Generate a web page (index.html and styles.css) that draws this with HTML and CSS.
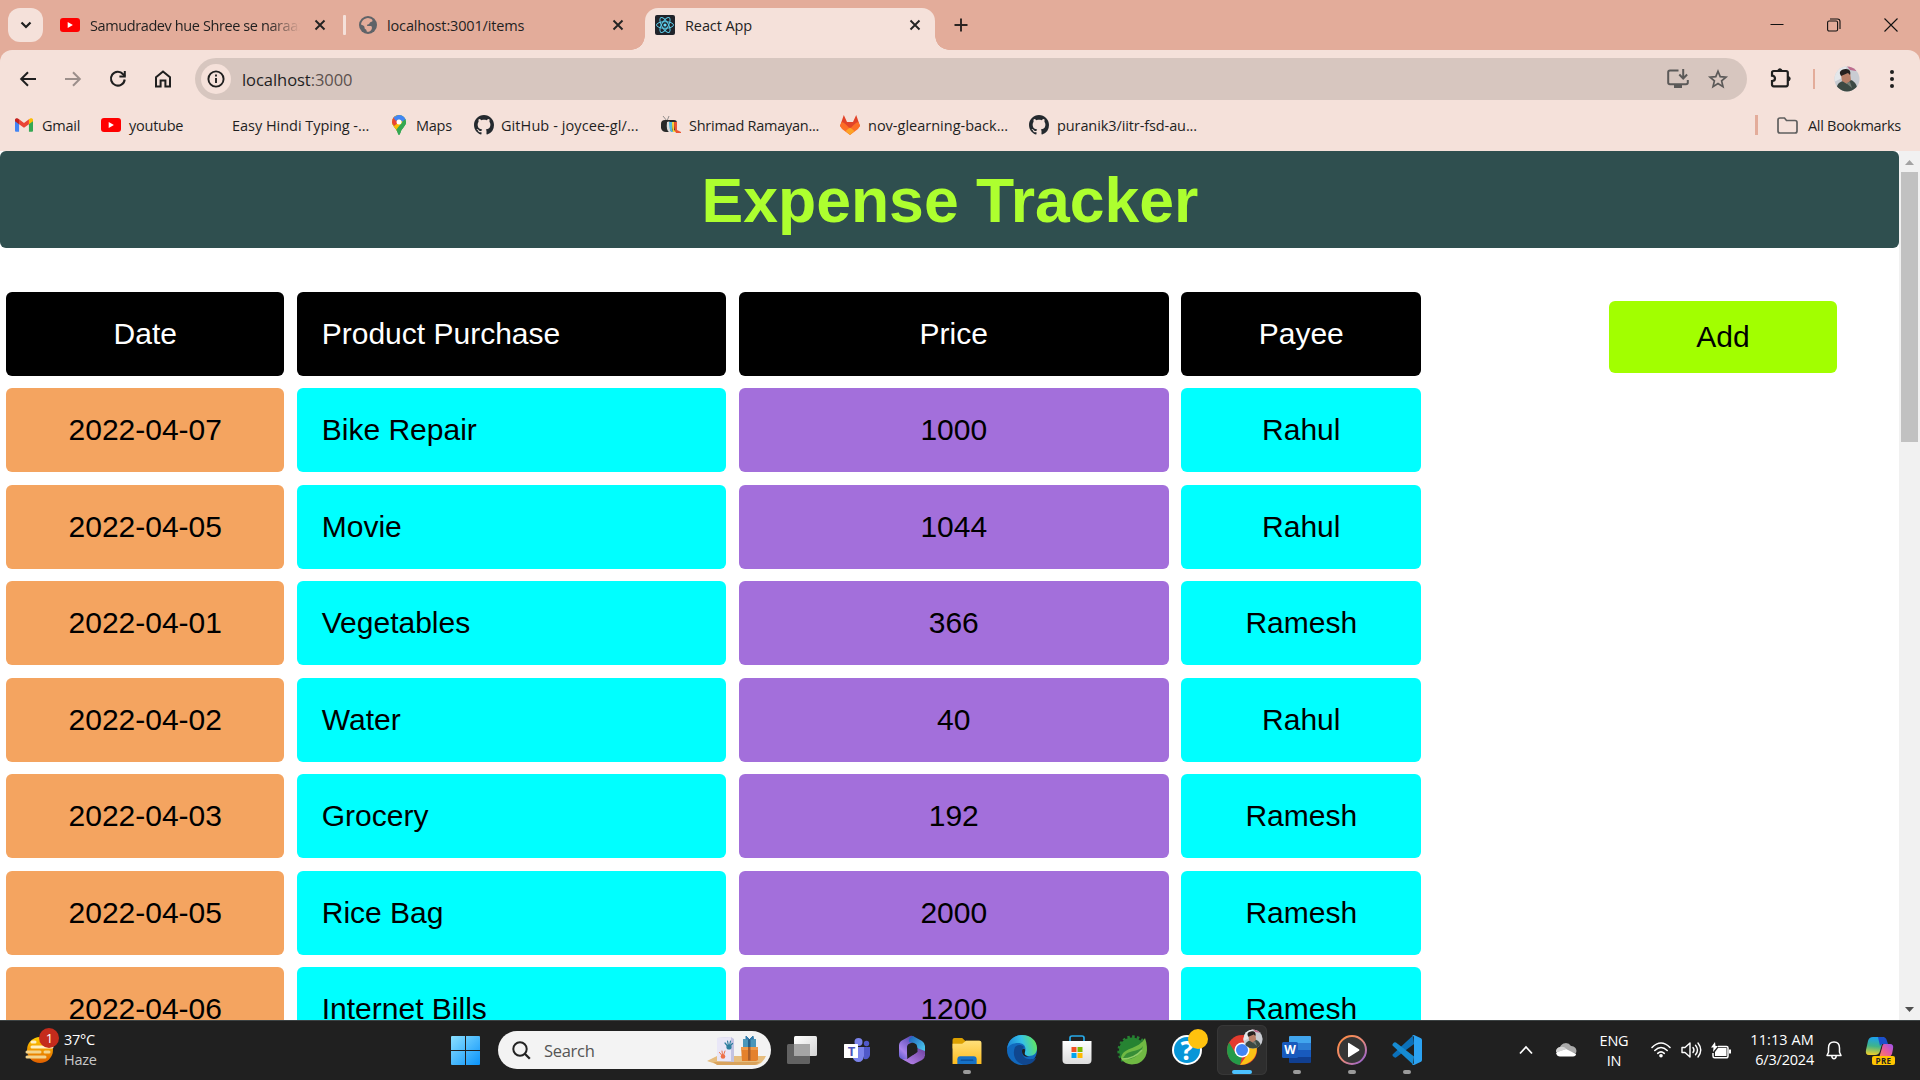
FILE: index.html
```html
<!DOCTYPE html>
<html lang="en">
<head>
<meta charset="utf-8">
<title>Expense Tracker</title>
<link rel="stylesheet" href="styles.css">
</head>
<body>
<svg class="defs" width="0" height="0">
  <defs>
    <linearGradient id="win" x1="0" y1="0" x2="1" y2="1"><stop offset="0" stop-color="#8be0ff"/><stop offset="1" stop-color="#0a93fa"/></linearGradient>
    <linearGradient id="sun" x1="0" y1="0" x2="0" y2="1"><stop offset="0" stop-color="#ffcf00"/><stop offset="1" stop-color="#e05f00"/></linearGradient>
    <linearGradient id="folder" x1="0" y1="0" x2="0" y2="1"><stop offset="0" stop-color="#ffe07a"/><stop offset="1" stop-color="#fdbc20"/></linearGradient>
    <linearGradient id="edge" x1="0" y1="0.4" x2="1" y2="0.2"><stop offset="0" stop-color="#1a84d8"/><stop offset="0.5" stop-color="#35c1e8"/><stop offset="1" stop-color="#66eb4f"/></linearGradient>
    <linearGradient id="store" x1="0" y1="0" x2="0" y2="1"><stop offset="0" stop-color="#fff"/><stop offset="1" stop-color="#dcdcdc"/></linearGradient>
    <linearGradient id="ring" x1="0" y1="0" x2="1" y2="1"><stop offset="0" stop-color="#ff8a3c"/><stop offset="0.5" stop-color="#e98a78"/><stop offset="1" stop-color="#8a5de0"/></linearGradient>
    <linearGradient id="hexA" x1="0" y1="1" x2="0.6" y2="0"><stop offset="0" stop-color="#4a4fc4"/><stop offset="0.4" stop-color="#a884ec"/><stop offset="1" stop-color="#5a4bb4"/></linearGradient>
    <linearGradient id="hexB" x1="0" y1="0" x2="1" y2="1"><stop offset="0" stop-color="#1b5cb8"/><stop offset="1" stop-color="#55ddf8"/></linearGradient>
    <linearGradient id="hexC" x1="0" y1="1" x2="1" y2="0"><stop offset="0" stop-color="#c08cf5"/><stop offset="1" stop-color="#6b3f9c"/></linearGradient>
    <linearGradient id="copA" x1="0.4" y1="0" x2="0.3" y2="1"><stop offset="0" stop-color="#1ba0ee"/><stop offset="0.5" stop-color="#3fb489"/><stop offset="1" stop-color="#f2d02a"/></linearGradient>
    <linearGradient id="copB" x1="1" y1="0" x2="0" y2="1"><stop offset="0" stop-color="#9a52f0"/><stop offset="0.5" stop-color="#e85b9c"/><stop offset="1" stop-color="#ff8a50"/></linearGradient>
    <linearGradient id="task" x1="0" y1="0" x2="1" y2="1"><stop offset="0" stop-color="#fff"/><stop offset="1" stop-color="#d4d4d4"/></linearGradient>
    <symbol id="youtube" viewBox="0 0 20 14"><rect width="20" height="14" rx="3" fill="#f00"/><path d="M7.7 4v6l5.2-3z" fill="#fff"/></symbol>
    <symbol id="close" viewBox="0 0 12 12"><path d="M1.500 1.500l9 9M10.500 1.500l-9 9" stroke="#232323" stroke-width="1.900"/></symbol>
    <symbol id="github" viewBox="0 0 16 16"><path fill="#24292e" d="M8 0C3.58 0 0 3.58 0 8c0 3.54 2.29 6.53 5.47 7.59.4.07.55-.17.55-.38 0-.19-.01-.82-.01-1.49-2.01.37-2.53-.49-2.69-.94-.09-.23-.48-.94-.82-1.13-.28-.15-.68-.52-.01-.53.63-.01 1.08.58 1.23.82.72 1.21 1.87.87 2.33.66.07-.52.28-.87.51-1.07-1.78-.2-3.64-.89-3.64-3.95 0-.87.31-1.59.82-2.15-.08-.2-.36-1.02.08-2.12 0 0 .67-.21 2.2.82.64-.18 1.32-.27 2-.27s1.36.09 2 .27c1.53-1.04 2.2-.82 2.2-.82.44 1.1.16 1.92.08 2.12.51.56.82 1.27.82 2.15 0 3.07-1.87 3.75-3.65 3.95.29.25.54.73.54 1.48 0 1.07-.01 1.93-.01 2.2 0 .21.15.46.55.38A8.01 8.01 0 0016 8c0-4.42-3.58-8-8-8z"/></symbol>
    <symbol id="avatar" viewBox="0 0 26 26"><clipPath id="face"><circle cx="13" cy="13" r="12.500"/></clipPath><g clip-path="url(#face)"><rect width="26" height="26" fill="#c9ccd2"/><path d="M0 0h13l-5 12-8 4z" fill="#e4e7ea"/><path d="M13 0h11l-2 5-6-1z" fill="#bf6d8e"/><path d="M2 26c0-7 3-10 7-11l8-1c5 2 6 6 7 12z" fill="#3c4943"/><path d="M7 9l9-3 1 8-4 4-5-3z" fill="#b98068"/><path d="M6 8c-1-4 4-5 6-5 4 0 5 3 4 6l-2-2-7 3z" fill="#26211f"/><path d="M12 17l4-1 2 6z" fill="#727d75"/></g></symbol>
  </defs>
</svg>

<header class="tabstrip">
  <div class="tabsearch"><svg width="12" height="12" viewBox="0 0 12 12"><path d="M1.500 3.500L6 8l4.500-4.500" fill="none" stroke="#1f1f1f" stroke-width="2.200"/></svg></div>
  <div class="tab tab-video">
    <svg width="20" height="14"><use href="#youtube"/></svg>
    <span class="tab-title faded">Samudradev hue Shree se naraaz</span>
    <svg class="x" width="12" height="12"><use href="#close"/></svg>
  </div>
  <i class="tab-divider"></i>
  <div class="tab tab-items">
    <svg width="18" height="18" viewBox="0 0 18 18"><circle cx="9" cy="9" r="9" fill="#5f6368"/><path d="M9 2c3 .3 4.800 1.500 4.500 3-.3 1-1.500.8-2.500 1.500-.8.700-.3 1.500-1.500 1.700-1.500.2-2 1-1 1.800H12c1.200.5 1.200 2 .5 3.500-.8 1.500-2.500 2.500-4.300 2.300-.9-.3-.4-1.800-1.200-2.300-1.500-.5-1.500-1.500-1.500-2.500C5 9.500 3.500 9 2 8.500 2.500 5 5 2.300 9 2z" fill="#e3ac9a"/></svg>
    <span class="tab-title">localhost:3001/items</span>
    <svg class="x" width="12" height="12"><use href="#close"/></svg>
  </div>
  <div class="tab tab-active">
    <svg width="20" height="20" viewBox="0 0 20 20"><rect width="20" height="20" rx="2" fill="#20232a"/><g fill="none" stroke="#5ccbe8" stroke-width="1"><ellipse cx="10" cy="10" rx="8.500" ry="3.300"/><ellipse cx="10" cy="10" rx="8.500" ry="3.300" transform="rotate(60 10 10)"/><ellipse cx="10" cy="10" rx="8.500" ry="3.300" transform="rotate(120 10 10)"/></g><circle cx="10" cy="10" r="1.600" fill="#61dafb"/></svg>
    <span class="tab-title">React App</span>
    <svg class="x" width="12" height="12"><use href="#close"/></svg>
  </div>
  <svg class="newtab" width="14" height="14" viewBox="0 0 14 14"><path d="M7 .5v13M.5 7h13" stroke="#2b2422" stroke-width="1.900"/></svg>
  <div class="window-buttons">
    <svg width="14" height="14" viewBox="0 0 14 14"><path d="M.5 6.500h13" stroke="#111" stroke-width="1"/></svg>
    <svg width="14" height="14" viewBox="0 0 14 14"><rect x=".6" y="3" width="10" height="10" rx="1.500" fill="none" stroke="#111" stroke-width="1.100"/><path d="M3 1h7.500Q13 1 13 3.500V11" fill="none" stroke="#111" stroke-width="1.100"/></svg>
    <svg width="14" height="14" viewBox="0 0 14 14"><path d="M.5 .5l13 13M13.500 .5l-13 13" stroke="#111" stroke-width="1.100"/></svg>
  </div>
</header>

<div class="chrome-body">
<nav class="toolbar">
  <div class="nav-icons">
    <svg width="18" height="18" viewBox="0 0 18 18"><path d="M17 9H2.500M9 2.200L2.200 9 9 15.800" fill="none" stroke="#1f1f1f" stroke-width="2"/></svg>
    <svg width="18" height="18" viewBox="0 0 18 18"><path d="M1 9h14.500M9 2.200L15.800 9 9 15.800" fill="none" stroke="#9c8f8b" stroke-width="2"/></svg>
    <svg width="18" height="18" viewBox="0 0 18 18"><path d="M15.700 9.500a6.900 6.900 0 1 1-1.600-5.300L16 6" fill="none" stroke="#1f1f1f" stroke-width="2.100"/><path d="M16.800 1v6.400h-6.400v-2h4.400V1z" fill="#1f1f1f"/></svg>
    <svg width="18" height="18" viewBox="0 0 18 18"><path d="M2 7.300L9 1.500l7 5.800v9.300h-4.600V10.500H6.600v6.100H2z" fill="none" stroke="#1f1f1f" stroke-width="2"/></svg>
  </div>
  <div class="omnibox">
    <span class="site-info"><svg width="18" height="18" viewBox="0 0 18 18"><circle cx="9" cy="9" r="7.600" fill="none" stroke="#1f1f1f" stroke-width="1.900"/><path d="M9 8v5M9 4.600v2" stroke="#1f1f1f" stroke-width="1.900"/></svg></span>
    <span class="url">localhost<span class="port">:3000</span></span>
    <svg class="install" width="22" height="20" viewBox="0 0 22 20"><path d="M11.500 1.500H3Q1.200 1.500 1.200 3.300v10.200q0 1.700 1.800 1.700h16q1.800 0 1.800-1.700V11" fill="none" stroke="#5b5958" stroke-width="2"/><path d="M7 15h8v4H7z" fill="#5b5958"/><path d="M16.200 0v9M12.300 5.500l3.900 4 3.900-4" fill="none" stroke="#5b5958" stroke-width="2"/></svg>
    <svg class="star" width="20" height="20" viewBox="0 0 20 20"><path d="M10 2.200l2.200 5.400 5.800.5-4.400 3.800 1.400 5.700-5-3.100-5 3.100 1.400-5.700L2 8.100l5.800-.5z" fill="none" stroke="#5b5958" stroke-width="1.700"/></svg>
  </div>
  <svg class="puzzle" width="22" height="22" viewBox="0 0 22 22"><path d="M3.700 4h12.400q1.700 0 1.700 1.700v11.900q0 1.700-1.700 1.700H3.700q-1.700 0-1.700-1.700v-3.500c4 0 4-5.500 0-5.500V5.700Q2 4 3.700 4z" fill="none" stroke="#1f1f1f" stroke-width="2.200"/><path d="M7.700 4a2.200 2.200 0 0 1 4.400 0M18 9.500a2.200 2.200 0 0 1 0 4.400" fill="#1f1f1f" stroke="#1f1f1f"/></svg>
  <i class="tool-divider"></i>
  <svg class="profile" width="26" height="26"><use href="#avatar"/></svg>
  <svg class="kebab" width="6" height="18" viewBox="0 0 6 18"><g fill="#1f1f1f"><circle cx="3" cy="2" r="2"/><circle cx="3" cy="9" r="2"/><circle cx="3" cy="16" r="2"/></g></svg>
</nav>

<nav class="bookmarks">
  <div class="bm bm-gmail"><svg width="18" height="14" viewBox="0 0 19 14"><path d="M0 2v11q0 1 1 1h3.300V4z" fill="#4285f4"/><path d="M14.700 4v10H18q1 0 1-1V2z" fill="#34a853"/><path d="M14.700 1v5.200L19 3V1.500C19 0 17-.5 16 .2z" fill="#fbbc04"/><path d="M4.300 6.200V1l5.200 3.900L14.700 1v5.200L9.500 10z" fill="#ea4335"/><path d="M0 1.500V3l4.300 3.200V1L3 .2C2-.5 0 0 0 1.500z" fill="#c5221f"/></svg><span>Gmail</span></div>
  <div class="bm bm-youtube"><svg width="20" height="14"><use href="#youtube"/></svg><span>youtube</span></div>
  <div class="bm bm-hindi"><span>Easy Hindi Typing -...</span></div>
  <div class="bm bm-maps"><svg width="14" height="20" viewBox="0 0 14 20"><clipPath id="pin"><path d="M7 0a7 7 0 0 1 7 7c0 4-4 6-5.300 10C8 19 7.800 20 7 20s-1-1-1.700-3C4 13 0 11 0 7a7 7 0 0 1 7-7z"/></clipPath><g clip-path="url(#pin)"><rect width="14" height="20" fill="#34a853"/><path d="M0 0h14v5L7 7z" fill="#4285f4"/><path d="M0 0h5l2 7-6 5-2-4z" fill="#fbbc04"/><path d="M0 13L9 3l3 6-7 8z" fill="#fbbc04"/><path d="M0 3l2-2 5 6-5 4-2-3z" fill="#ea4335"/><path d="M1 2L7 0l7 4-3 3-4-3-3 2z" fill="#4285f4"/><path d="M14 4v9l-7 7-3-5 8-10z" fill="#34a853"/></g><circle cx="7" cy="7" r="2.500" fill="#fff"/></svg><span>Maps</span></div>
  <div class="bm bm-joycee"><svg width="20" height="20"><use href="#github"/></svg><span>GitHub - joycee-gl/...</span></div>
  <div class="bm bm-ramayan"><svg width="20" height="18" viewBox="0 0 20 18"><path d="M2 0l4 5 2-5" stroke="#777" stroke-width=".8" fill="none"/><path d="M4 4h9q3 0 3 3v7q0 2-3 2H5q-4 0-5-4V8q0-4 4-4z" fill="#292929"/><path d="M6 6q2-1 3 0v8l2 2H8q-3-2-2-10z" fill="#ddd"/><path d="M8 6h3v8l2 2h-3q-2-3-2-10z" fill="#51b8dd"/><path d="M11 6h2v8l3 2h-4q-1-3-1-10z" fill="#f7d43b"/><path d="M13 6h3v8l4 2v1h-5q-2-3-2-11z" fill="#ec5533"/></svg><span>Shrimad Ramayan...</span></div>
  <div class="bm bm-nov"><svg width="20" height="20" viewBox="0 0 20 20"><path d="M3.800 0L7 7h6l3.200-7L20 11l-10 8L0 11z" fill="#e24329"/><path d="M0 11l1.500-4Q6 8 10 14.500 14 8 18.500 7L20 11l-2 3-8 6-8-6z" fill="#fc6d26"/><path d="M5.500 16L10 12.500l4.500 3.500L10 20z" fill="#fca326"/></svg><span>nov-glearning-back...</span></div>
  <div class="bm bm-puranik"><svg width="20" height="20"><use href="#github"/></svg><span>puranik3/iitr-fsd-au...</span></div>
  <div class="bm bm-all"><svg width="21" height="17" viewBox="0 0 21 17"><path d="M1 3Q1 1 3 1h4.500l2 2.500H18q2 0 2 2V14q0 2-2 2H3q-2 0-2-2z" fill="none" stroke="#5f5f5f" stroke-width="1.700"/></svg><span>All Bookmarks</span></div>
</nav>
</div>

<div class="viewport">
  <main class="page">
    <h1>Expense Tracker</h1>
    <div class="content">
      <section class="expenses">
        <div class="col col-date"><div class="cell head">Date</div><div class="cell">2022-04-07</div><div class="cell">2022-04-05</div><div class="cell">2022-04-01</div><div class="cell">2022-04-02</div><div class="cell">2022-04-03</div><div class="cell">2022-04-05</div><div class="cell">2022-04-06</div></div>
        <div class="col col-product"><div class="cell head">Product Purchase</div><div class="cell">Bike Repair</div><div class="cell">Movie</div><div class="cell">Vegetables</div><div class="cell">Water</div><div class="cell">Grocery</div><div class="cell">Rice Bag</div><div class="cell">Internet Bills</div></div>
        <div class="col col-price"><div class="cell head">Price</div><div class="cell">1000</div><div class="cell">1044</div><div class="cell">366</div><div class="cell">40</div><div class="cell">192</div><div class="cell">2000</div><div class="cell">1200</div></div>
        <div class="col col-payee"><div class="cell head">Payee</div><div class="cell">Rahul</div><div class="cell">Rahul</div><div class="cell">Ramesh</div><div class="cell">Rahul</div><div class="cell">Ramesh</div><div class="cell">Ramesh</div><div class="cell">Ramesh</div></div>
      </section>
      <button class="add">Add</button>
    </div>
  </main>
  <div class="scrollbar">
    <svg width="21" height="21" viewBox="0 0 21 21"><path d="M6 14l4.500-5 4.500 5z" fill="#a3a3a3"/></svg>
    <div class="thumb"></div>
    <svg width="21" height="21" viewBox="0 0 21 21"><path d="M6 8l4.500 5L15 8z" fill="#505050"/></svg>
  </div>
</div>

<footer class="taskbar">
  <div class="weather">
    <svg width="36" height="36" viewBox="0 0 36 36"><circle cx="15" cy="22" r="13" fill="url(#sun)"/><g stroke="#fff0c4" stroke-width="3" stroke-linecap="round"><path d="M7 14h3M7 19h20"/><path d="M2 24h13M20 24h4M2 29h18" stroke="#f3d48d"/></g><circle cx="24" cy="10" r="10" fill="#c42b1c"/><text x="24.500" y="15" text-anchor="middle" class="badge-text">1</text></svg>
    <div class="weather-text"><span>37°C</span><span class="dim">Haze</span></div>
  </div>
  <svg class="start" width="29" height="29" viewBox="0 0 29 29"><path d="M1 0h13v14H0V1q0-1 1-1zM15 0h13q1 0 1 1v13H15zM0 15h14v14H1q-1 0-1-1zM15 15h14v13q0 1-1 1H15z" fill="url(#win)"/></svg>
  <div class="search">
    <svg width="19" height="19" viewBox="0 0 19 19"><circle cx="8" cy="8" r="6.700" fill="none" stroke="#222" stroke-width="2"/><path d="M12.800 12.800l5 5" stroke="#222" stroke-width="2.300"/></svg>
    <span>Search</span>
    <svg class="gift" width="60" height="32" viewBox="0 0 60 32"><path d="M0 27l10-5h49q-3 7-9 9H12z" fill="#e6bd7e"/><path d="M10 31h38l5-3H6z" fill="#d9a35c"/><path d="M10 4l14-1 3 2v23l-17-1z" fill="#c3c3e2"/><path d="M10 4l14-1v24H10z" fill="#e9e7f7"/><g stroke="#2e7f9e" stroke-width="1.200" stroke-linecap="round"><path d="M18 9l2.500 3M20.500 7l1 5M23.500 7l-1 5M25.500 9.500l-3 3"/></g><circle cx="22" cy="13" r="2.600" fill="#2e7f9e"/><g stroke="#ee7148" stroke-width="1" stroke-linecap="round"><path d="M12.500 18.500l2.500 3M15 17l.5 4M18 17l-1.500 4"/></g><circle cx="16" cy="22.500" r="2.300" fill="#ee7148"/><path d="M34 13h17v13l-2 1H35z" fill="#e4812c"/><path d="M34 13h17v3H34z" fill="#ef9b4b"/><path d="M41 13h2.500v13.500H41z" fill="#a85e2a"/><path d="M36 5h13v8H36z" fill="#4a97ba"/><path d="M41 5h2.500v8H41z" fill="#255f88"/><path d="M42 5l-3-3v3zM43 5l3-3 .5 3z" fill="#347dac" stroke="#347dac"/></svg>
  </div>
  <div class="apps">
    <div class="app"><svg width="30" height="28" viewBox="0 0 30 28"><rect x="7" width="23" height="20" rx="1.500" fill="url(#task)"/><rect y="8" width="23" height="20" rx="1.500" fill="#626262"/><path d="M7 8h16v12H7z" fill="#a5a5a5"/></svg></div>
    <div class="app"><svg width="26" height="26" viewBox="0 0 26 26"><circle cx="14.500" cy="5" r="4" fill="#7b83eb"/><circle cx="22.500" cy="6.500" r="2.700" fill="#5059c9"/><path d="M18 10h8v8q-1 5-6 4z" fill="#5059c9"/><path d="M8 10h12v9q-1 6-5.500 6T8 19z" fill="#7b83eb"/><rect x="0" y="7" width="14" height="14" rx=".5" fill="#fff"/><text x="7.500" y="19" text-anchor="middle" class="teams-text">T</text></svg></div>
    <div class="app"><svg width="28" height="28" viewBox="0 0 28 28"><path d="M12 0L3 5Q1 7 1 9v10q0 3 3 4l4 2q2-3 1-7v-7q0-3 4-4l5-3-2-3Q14-1 12 0z" fill="url(#hexA)"/><path d="M15 0l9 5q3 2 3 5v10l-8-5v-5q0-2-3-3l-5-1q-1-4 4-6z" fill="url(#hexB)"/><path d="M27 15v4q0 3-3 5l-8 4q-2 1-5-1l-7-4q5 1 8-2l6-4q2-2 1-5z" fill="url(#hexC)"/><path d="M11 9l3-1 4 1.500q1.500 1 1.500 3V16l-4 2.500q-2 1-4-.5l-2-2v-3.500q0-2 1.500-3.500z" fill="#202020"/></svg></div>
    <div class="app running"><svg width="30" height="27" viewBox="0 0 30 28"><path d="M0 3q0-2 2-2h8l3 3h15v8H0z" fill="#dca000"/><path d="M0 7h10l4-3h14q2 0 2 2v22H0z" fill="url(#folder)"/><path d="M5 28v-5q0-3 3-3h14q3 0 3 3v5z" fill="#1672c7"/><path d="M9 24h12" stroke="#0a4a94" stroke-width="1.300" stroke-linecap="round"/></svg></div>
    <div class="app"><svg width="30" height="30" viewBox="0 0 30 30"><circle cx="15" cy="15" r="15" fill="#1168bd"/><path d="M0 14C1 5 7 0 15 0c9 0 15 6 15 13 0 5-3 8-8 8-4 0-5-2-4-4 2-6-2-9-7-9C6 8 2 10 0 14z" fill="url(#edge)"/><path d="M8 12C4 22 11 30 19 30c5-1 8-3 10-7-8 3-13 0-14-5-.5-3 1-5 2-6-3-3-7-2-9 0z" fill="#10478f"/><path d="M15 16c0-3 4-3 3 1-1 2 0 4 4 4-4 2-7-1-7-5z" fill="#202020"/></svg></div>
    <div class="app"><svg width="30" height="30" viewBox="0 0 30 30"><path d="M8 7V3q0-2 2-2h10q2 0 2 2v4" fill="none" stroke="#27a9e8" stroke-width="1.700"/><path d="M.5 6h29v19q0 4-4 4h-21q-4 0-4-4z" fill="url(#store)"/><path d="M9.500 12h5v5h-5z" fill="#f25022"/><path d="M15.500 12h5v5h-5z" fill="#7fba00"/><path d="M9.500 18h5v5h-5z" fill="#00a4ef"/><path d="M15.500 18h5v5h-5z" fill="#ffb900"/></svg></div>
    <div class="app"><svg width="30" height="30" viewBox="0 0 30 30"><path d="M26 6A14 14 0 1 0 6 26" fill="none" stroke="#268332" stroke-width="3" stroke-dasharray="2.500 2.200"/><circle cx="15" cy="15.500" r="13" fill="#268332"/><path d="M28 3c4 12 2 21-6 25-8 3-14 1-18-4C4 12 22 15 28 3z" fill="#70b943"/><path d="M6 23c8 4 18-3 20-12-4 6-12 4-17 8z" fill="#378d37"/><path d="M5 24c9 0 15-3 20-9" fill="none" stroke="#91cd65" stroke-width="1.500"/></svg></div>
    <div class="app"><svg class="help" width="36" height="36" viewBox="0 0 36 36"><circle cx="15" cy="21" r="15" fill="#fff"/><circle cx="15" cy="21" r="13" fill="#0796d8"/><text x="15" y="31" text-anchor="middle" class="help-text">?</text><circle cx="26" cy="10" r="10" fill="#ffc20e"/></svg></div>
    <div class="app active"><svg class="chrome" width="36" height="36" viewBox="0 0 36 36"><circle cx="15" cy="21" r="15" fill="#e33b2e"/><path d="M2 13.500L9 25l6 3-2 8C5 35 0 29 0 21q0-4 2-7.500z" fill="#249b48"/><path d="M15 14h13.500C33 25 25 36 13 36l8-11.500z" fill="#fbc116"/><circle cx="15" cy="21" r="7.500" fill="#fff"/><circle cx="15" cy="21" r="6" fill="#4285f4"/><svg x="16" y="0" width="20" height="20"><use href="#avatar"/></svg></svg></div>
    <div class="app running"><svg width="30" height="28" viewBox="0 0 30 28"><path d="M8 0h20q1 0 1 1v6H7V1q0-1 1-1z" fill="#41a5ee"/><path d="M7 7h22v7H7z" fill="#2b7cd3"/><path d="M7 14h22v7H7z" fill="#185abd"/><path d="M7 21h22v5q0 1-1 1H8q-1 0-1-1z" fill="#103f91"/><rect y="6" width="16" height="16" rx="1.500" fill="#185abd"/><text x="8" y="18" text-anchor="middle" class="word-text">W</text></svg></div>
    <div class="app running"><svg width="30" height="30" viewBox="0 0 30 30"><circle cx="15" cy="15" r="14" fill="#353535" stroke="url(#ring)" stroke-width="2"/><path d="M11 8.500q0-1 1-.5l10 6.200q1 .8 0 1.600L12 22q-1 .5-1-.5z" fill="#fff"/></svg></div>
    <div class="app running"><svg width="30" height="30" viewBox="0 0 30 30"><path d="M.5 19.500L21 .5l1 8.500L4 22.500q-1 .5-2-.5-2-1-1.500-2.500z" fill="#0b70b9"/><path d="M.5 10.500Q0 9 1.500 8q1-1.200 2.500-.5L22 21.500l-1 8z" fill="#168bd2"/><path d="M20 .5q1-.8 2-.4l7 3.200q1 .5 1 2v19.400q0 1.500-1 2l-7 3.200q-1 .4-2-.4 2 0 2-2v-25q0-2-2-2z" fill="#2ba2f2"/></svg></div>
  </div>
  <div class="tray">
    <svg class="chevron" width="14" height="10" viewBox="0 0 14 10"><path d="M1 8.500l6-6.500 6 6.500" fill="none" stroke="#fff" stroke-width="1.800"/></svg>
    <svg class="cloud" width="20" height="14" viewBox="0 0 20 14"><path d="M0 9a5 5 0 0 1 4-5 6.200 6.200 0 0 1 11-1 5 5 0 0 1 5 7z" fill="#aaa"/><path d="M0 10q1-1.500 4-2l6-2 8 4q2 .5 2 1 0 2-3 2.500H4Q1 13.500 0 10z" fill="#fff"/><path d="M4 4q4-1 6.500 2L3 8.500 0 9q0-4 4-5z" fill="#d5d5d5"/></svg>
    <div class="lang"><span>ENG</span><span>IN</span></div>
    <svg class="wifi" width="20" height="16" viewBox="0 0 20 16"><g fill="none" stroke="#fff" stroke-width="1.600" stroke-linecap="round"><path d="M1 5.500q9-9 18 0M3.800 8.500q6.200-6 12.400 0M6.700 11.300q3.300-3 6.600 0"/></g><circle cx="10" cy="13.800" r="1.800" fill="#fff"/></svg>
    <svg class="sound" width="20" height="18" viewBox="0 0 20 18"><g fill="none" stroke="#fff" stroke-width="1.400" stroke-linejoin="round" stroke-linecap="round"><path d="M1 6.500h3L9 2v14l-5-4.500H1zM12 6.500q2 2.500 0 5M14.500 4.200q4 4.800 0 9.600M17 2q5.500 7 0 14"/></g></svg>
    <svg class="battery" width="20" height="17" viewBox="0 0 20 17"><path d="M7 4.500h8.500Q17 4.500 17 6v8q0 1.800-1.800 1.800H3.600Q2 15.800 2 14v-3" fill="none" stroke="#fff" stroke-width="1.500"/><path d="M7 6h8.500v8H4v-4z" fill="#fff"/><path d="M18 7.500h2v4h-2z" fill="#fff"/><path d="M4 0L0 5.500h2.500L2 10l5-6H4.500z" fill="#fff"/></svg>
    <div class="clock"><span class="time">11:13 AM</span><span>6/3/2024</span></div>
    <svg class="bell" width="16" height="19" viewBox="0 0 16 19"><path d="M1 14.500l1.500-3.200V7Q2.500 1 8 1t5.500 6v4.300l1.500 3.200zM5.800 15q.2 2.800 2.200 2.800T10.200 15" fill="none" stroke="#fff" stroke-width="1.500" stroke-linejoin="round"/></svg>
    <svg class="copilot" width="30" height="29" viewBox="0 0 30 29"><path d="M8 1h11l-4 14q-1 4-5 4H4Q0 19 1 14L3 5q1-4 5-4z" fill="url(#copA)"/><path d="M13 1h5q3 0 4 4l1 3h-5q-2 0-3 2z" fill="#1b4fcb"/><path d="M19 8h6q4 0 3 5l-1 5q-2 4-7 4h-6l3-10q.5-4 2-4z" fill="url(#copB)"/><rect x="7" y="20" width="23" height="9" rx="2" fill="#ffc500"/><text x="18.500" y="27.500" text-anchor="middle" class="pre-text">PRE</text></svg>
  </div>
</footer>
</body>
</html>
```
FILE: styles.css
```css
* { box-sizing: border-box; }
html, body { width: 1920px; height: 1080px; overflow: hidden; }
body { margin: 0; display: flex; flex-direction: column; background: #fff; font-family: "Open Sans", "Noto Sans", sans-serif; font-size: 14.5px; color: #1f1f1f; }
svg { display: block; flex: none; overflow: visible; }
.defs { position: absolute; }

.tabstrip { height: 50px; flex: none; display: flex; align-items: center; padding-left: 8px; background: #e3ac9a; }
.tabsearch { width: 35px; height: 34px; border-radius: 12px; background: #f5e1da; display: flex; align-items: center; justify-content: center; }
.tab { display: flex; align-items: center; height: 42px; }
.tab-title { flex: 1; margin-left: 10px; white-space: nowrap; overflow: hidden; letter-spacing: -0.4px; }
.tab .x { margin-left: 14px; }
.tab-video { width: 283px; margin-left: 17px; padding-right: 17px; }
.faded { -webkit-mask-image: linear-gradient(90deg, #000 85%, transparent); mask-image: linear-gradient(90deg, #000 85%, transparent); }
.tab-divider { width: 3px; height: 20px; border-radius: 1px; background: #f5e1da; }
.tab-items { width: 299px; padding: 0 21px 0 13px; }
.tab-items .tab-title { letter-spacing: -0.15px; }
.tab-active { position: relative; width: 290px; align-self: flex-end; padding: 0 14px 8px 10px; border-radius: 13px 13px 0 0; background: #f5e1da; }
.tab-active .tab-title { letter-spacing: -0.1px; }
.tab-active::before, .tab-active::after { content: ""; position: absolute; bottom: 0; width: 14px; height: 14px; }
.tab-active::before { left: -14px; background: radial-gradient(circle at 0 0, transparent 13.5px, #f5e1da 14px); }
.tab-active::after { right: -14px; background: radial-gradient(circle at 100% 0, transparent 13.5px, #f5e1da 14px); }
.newtab { margin-left: 19px; }
.window-buttons { display: flex; gap: 43px; margin-left: auto; padding-right: 22px; }

.chrome-body { height: 101px; flex: none; background: linear-gradient(#e3ac9a 12px, transparent 12px); }
.toolbar { height: 58px; display: flex; align-items: center; padding: 0 25px 0 19px; border-radius: 12px 12px 0 0; background: #f5e1da; }
.nav-icons { display: flex; gap: 27px; width: 176px; }
.omnibox { width: 1552px; height: 42px; border-radius: 21px; background: #d7c6bf; display: flex; align-items: center; padding: 0 19px 0 6px; }
.site-info { width: 30px; height: 30px; border-radius: 50%; background: #f5e1da; display: flex; align-items: center; justify-content: center; }
.url { margin-left: 11px; font-size: 16.5px; letter-spacing: -0.05px; }
.port { color: #5c514e; }
.install { margin-left: auto; }
.star { margin-left: 19px; }
.puzzle { margin-left: 23px; margin-bottom: 2px; }
.tool-divider { width: 2px; height: 20px; margin-left: 21px; background: #e3ac9a; }
.profile { margin-left: 19px; }
.kebab { margin-left: auto; }

.bookmarks { height: 43px; display: flex; align-items: center; padding: 0 19px 9px 15px; background: #f5e1da; }
.bm { display: flex; align-items: center; height: 20px; gap: 8px; white-space: nowrap; letter-spacing: -0.25px; }
.bm-gmail { width: 86px; gap: 9px; }
.bm-youtube { width: 131px; }
.bm-hindi { width: 160px; letter-spacing: -0.03px; }
.bm-maps { width: 82px; gap: 10px; }
.bm-joycee { width: 187px; gap: 7px; letter-spacing: 0.08px; }
.bm-ramayan { width: 179px; }
.bm-nov { width: 189px; letter-spacing: 0; }
.bm-puranik { letter-spacing: -0.1px; }
.bm-all { margin-left: auto; padding-left: 19px; gap: 10px; border-left: 3px solid #e3ac9a; letter-spacing: -0.27px; }

.viewport { height: 869px; flex: none; display: flex; overflow: hidden; background: #fff; }
.page { width: 1899px; font-family: "Liberation Sans", Arial, sans-serif; }
h1 { margin: 0; height: 97px; padding-left: 1px; line-height: 99px; border-radius: 6px; background: #2f4f4f; color: #adff2f; text-align: center; font-size: 62.5px; }
.content { display: flex; align-items: flex-start; justify-content: space-between; padding: 43.75px 62px 0 6.25px; }
.expenses { display: flex; gap: 12.5px; }
.col { display: flex; flex-direction: column; gap: 12.5px; }
.cell { height: 84px; flex: none; border-radius: 6px; display: flex; align-items: center; justify-content: center; font-size: 30px; color: #000; }
.col-date { width: 278px; }
.col-product { width: 429.5px; }
.col-price { width: 430px; }
.col-payee { width: 240px; }
.col-date .cell { background: #f4a460; }
.col-product .cell { background: #0ff; justify-content: flex-start; padding-left: 25px; }
.col-price .cell { background: #a36fdb; }
.col-payee .cell { background: #0ff; }
.col .head { background: #000; color: #fff; }
.add { width: 228px; height: 72px; margin-top: 9.25px; padding: 0; border: 0; border-radius: 6px; background: #a2ff00; color: #000; font: 30px "Liberation Sans", Arial, sans-serif; }
.scrollbar { width: 21px; display: flex; flex-direction: column; align-items: center; background: #f1f1f1; }
.thumb { width: 17px; height: 270px; margin-bottom: auto; background: #c1c1c1; }

.taskbar { height: 60px; flex: none; display: flex; align-items: center; border-top: 1px solid #3c4243; padding-bottom: 1px; background: #202020; color: #fff; }
.weather { display: flex; width: 451px; padding-left: 25px; }
.weather svg { margin-top: -2px; }
.weather-text { margin-left: 3px; display: flex; flex-direction: column; line-height: 20px; font-size: 14.5px; letter-spacing: -0.3px; }
.dim { color: #c8c8c8; }
.badge-text { font-size: 13px; fill: #fff; }
.search { width: 273px; height: 38px; margin-left: 18px; border-radius: 19px; background: #f3f3f3; display: flex; align-items: center; padding: 0 4px 0 14px; color: #555; font-size: 16.5px; letter-spacing: -0.3px; }
.search span { margin-left: 13px; }
.gift { margin-left: auto; }
.apps { display: flex; margin-left: 3px; }
.app { position: relative; width: 55px; height: 50px; display: flex; align-items: center; justify-content: center; border-radius: 6px; }
.help, .chrome { margin: -6px 0 0 6px; }
.active { width: 50px; margin: 0 2.5px; background: #2e2e2e; box-shadow: inset 0 0 0 1px #373737; }
.running::after, .active::after { content: ""; position: absolute; bottom: 1px; width: 8px; height: 4px; border-radius: 2px; background: #9a9a9a; }
.active::after { width: 20px; background: #4cc2ff; }
.teams-text { font: bold 13px "Open Sans", sans-serif; fill: #4b53bc; }
.word-text { font: bold 12px "Open Sans", sans-serif; fill: #fff; }
.help-text { font: bold 27px "Open Sans", sans-serif; fill: #fff; }
.pre-text { font: bold 8px "Open Sans", sans-serif; fill: #222; letter-spacing: 0.4px; }
.tray { display: flex; align-items: center; margin-left: auto; padding-right: 25px; font-size: 14.5px; line-height: 20px; letter-spacing: -0.2px; }
.cloud { margin-left: 23px; }
.lang { width: 30px; margin-left: 23px; display: flex; flex-direction: column; align-items: center; padding-top: 2px; }
.wifi { margin-left: 22px; }
.sound, .battery { margin-left: 10px; }
.clock { width: 73px; margin-left: 10px; display: flex; flex-direction: column; align-items: flex-end; white-space: nowrap; }
.time { letter-spacing: 0.1px; }
.bell { margin-left: 12px; }
.copilot { margin-left: 23px; }
```
